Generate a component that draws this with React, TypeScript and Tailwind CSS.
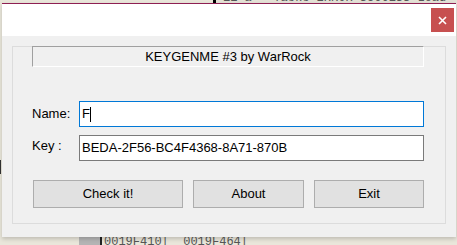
import React from "react";

const font = { fontFamily: '"Liberation Sans", Arial, sans-serif' };

export default function App() {
  return (
    <div className="relative w-[457px] h-[245px] overflow-hidden bg-[#e9e6da]" style={font}>
      {/* background debugger window behind (top strip) */}
      <div className="absolute left-[213px] top-0 w-[244px] h-[4px] bg-[#e4e1d6] overflow-hidden">
        <div className="absolute left-0 top-0 w-[3px] h-[4px] bg-black" />
        <div
          className="absolute left-[10px] top-[-8px] text-[12px] leading-[12px] text-[#555] whitespace-pre"
          style={{ fontFamily: '"Liberation Mono", monospace' }}
        >
          {"11 a   Tasks ERROR SUCCESS Load"}
        </div>
      </div>
      {/* background debugger bits (bottom) */}
      <div className="absolute left-[79px] top-[237px] w-[21px] h-[8px] bg-[#b4b4b4]" />
      <div className="absolute left-[100px] top-[237px] w-[2px] h-[8px] bg-[#222]" />
      <div
        className="absolute left-[104px] top-[236px] text-[12px] leading-[12px] text-[#555] whitespace-pre"
        style={{ fontFamily: '"Liberation Mono", monospace' }}
      >
        {"0019F410|  0019F464|"}
      </div>
      <div className="absolute left-0 top-[160px] w-[1px] h-[14px] bg-[#333]" />

      {/* dialog window */}
      <div className="absolute left-[2px] top-[3px] w-[454px] h-[234px] flex flex-col border-t border-t-[#8e1f52] shadow-[0_2px_4px_rgba(0,0,0,0.18)]">
        {/* title bar */}
        <div className="h-[32px] bg-white flex justify-end items-start pr-[2px] pt-[4px]">
          <div className="w-[23px] h-[24px] bg-[#c75050] flex items-center justify-center">
            <svg width="9" height="9" viewBox="0 0 9 9">
              <path d="M1 1 L8 8 M8 1 L1 8" stroke="white" strokeWidth="1.6" />
            </svg>
          </div>
        </div>
        {/* body */}
        <div className="flex-1 bg-[#f0f0f0] pt-[10px] pl-[10px]">
          <div className="w-[434px] h-[178px] border border-[#dcdcdc] pl-[19px] flex flex-col">
            {/* title static */}
            <div className="-mt-px w-[392px] h-[21px] border border-t-[#a0a0a0] border-l-[#a0a0a0] border-b-white border-r-white flex items-center justify-center text-[13px] text-black">
              KEYGENME #3 by WarRock
            </div>
            {/* name row */}
            <div className="mt-[34px] flex items-center">
              <div className="w-[47px] text-[13px] text-black">Name:</div>
              <div className="w-[345px] h-[26px] bg-white border border-[#0078d7] flex items-center pl-[2px] text-[13px] text-black">
                <span>F</span>
                <span className="w-px h-[15px] bg-black" />
              </div>
            </div>
            {/* key row */}
            <div className="mt-[8px] flex items-center">
              <div className="w-[47px] text-[13px] text-black -mt-[4px]">Key :</div>
              <div className="w-[345px] h-[26px] bg-white border border-[#7a7a7a] flex items-center pl-[2px] text-[13px] text-black">
                BEDA-2F56-BC4F4368-8A71-870B
              </div>
            </div>
            {/* buttons */}
            <div className="mt-[19px] flex pl-px gap-[10px]">
              <div className="w-[150px] h-[28px] bg-[#e1e1e1] border border-[#adadad] flex items-center justify-center text-[13px] text-black">
                Check it!
              </div>
              <div className="w-[111px] h-[28px] bg-[#e1e1e1] border border-[#adadad] flex items-center justify-center text-[13px] text-black">
                About
              </div>
              <div className="w-[110px] h-[28px] bg-[#e1e1e1] border border-[#adadad] flex items-center justify-center text-[13px] text-black">
                Exit
              </div>
            </div>
          </div>
        </div>
      </div>
    </div>
  );
}
